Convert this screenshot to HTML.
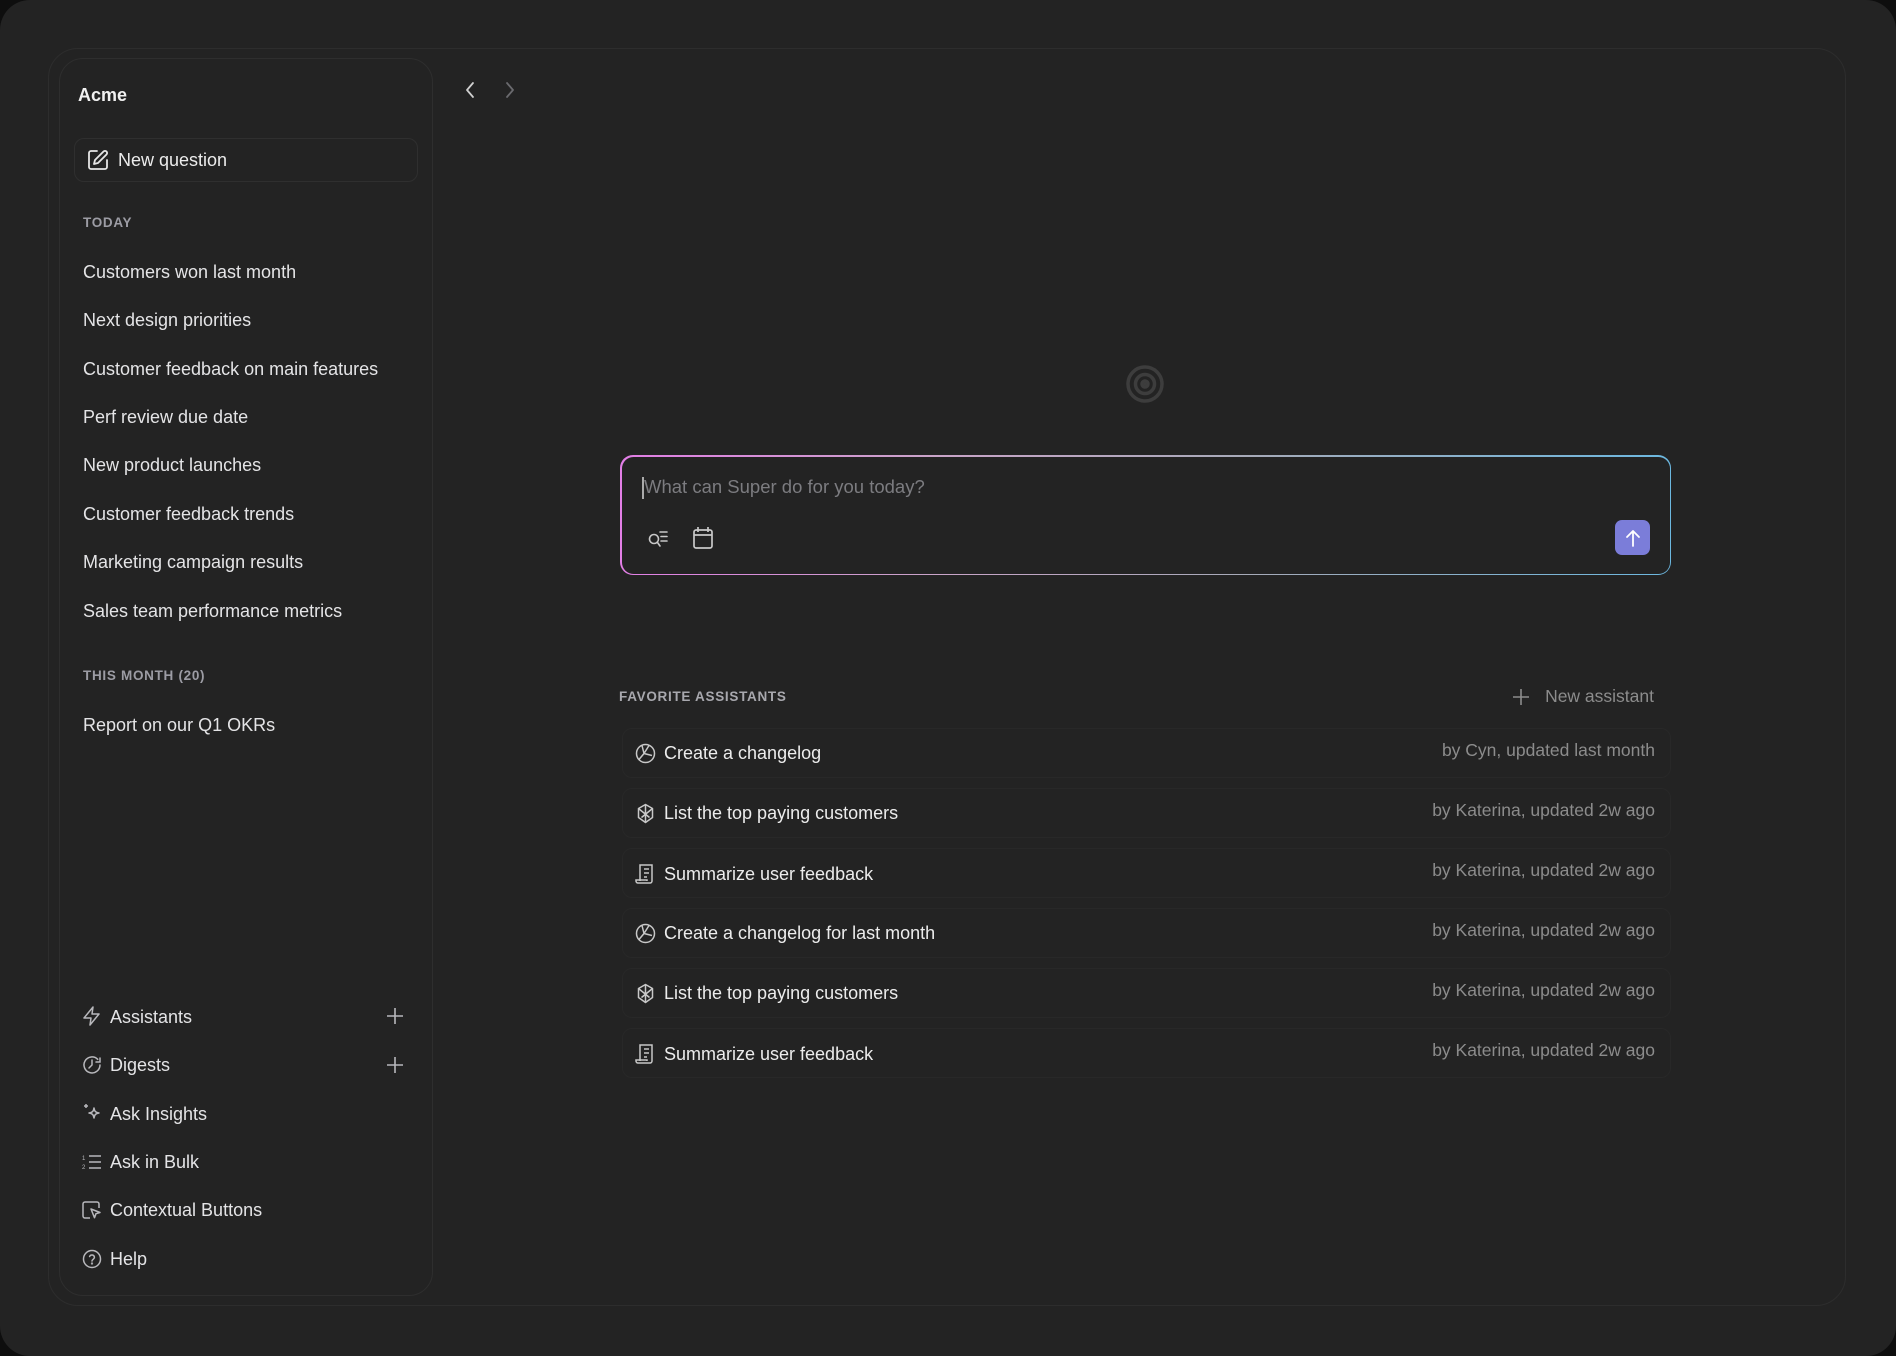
<!DOCTYPE html>
<html><head><meta charset="utf-8"><style>
*{box-sizing:border-box;margin:0;padding:0}
html,body{width:1896px;height:1356px;background:#0e0e0e;overflow:hidden;font-family:"Liberation Sans",sans-serif}
.screen{position:absolute;left:0;top:0;width:1896px;height:1356px;background:#232323;border-radius:30px}
.frame{position:absolute;left:48px;top:48px;width:1798px;height:1258px;border:1px solid #2d2d2d;border-radius:30px}
.side{position:absolute;left:59px;top:58px;width:374px;height:1238px;border:1px solid #2e2e2e;border-radius:24px}
.t{position:absolute;white-space:nowrap;line-height:1}
.item{color:#e4e4e6;font-size:18px}
.sec{color:#9c9ca4;font-size:13.5px;font-weight:bold;letter-spacing:.7px}
.nq{position:absolute;left:74px;top:138px;width:344px;height:44px;border:1px solid #2f2f2f;border-radius:10px}
svg{position:absolute;overflow:visible}
.row{position:absolute;left:622px;width:1049px;height:50px;border:1px solid #282828;border-radius:10px}
.rt{color:#ececec;font-size:18px}
.rm{color:#8c8c8c;font-size:17.5px;right:241px}
.input{position:absolute;left:620px;top:455px;width:1051px;height:120px;border-radius:13px;padding:1.5px;background:linear-gradient(90deg,#e27ee6,#c9a4c8 30%,#a6aab8 60%,#6cb8e0)}
.input>div{width:100%;height:100%;background:#232323;border-radius:11.5px}
</style></head><body>
<div class="screen"></div>
<div class="frame"></div>
<div class="side"></div>

<div class="t" style="left:78px;top:86px;color:#f0f0f0;font-size:18px;font-weight:bold">Acme</div>
<div class="nq"></div>
<svg style="left:87px;top:149px" width="22" height="22" viewBox="0 0 22 22" fill="none" stroke="#e6e6e6" stroke-width="1.8" stroke-linecap="round" stroke-linejoin="round"><path d="M10 2H4a2 2 0 0 0-2 2v14a2 2 0 0 0 2 2h14a2 2 0 0 0 2-2v-7"/><path d="M16.5 2.5a2.1 2.1 0 0 1 3 3L11 14l-4 1 1-4z"/></svg>
<div class="t" style="left:118px;top:151px;color:#ececec;font-size:18px">New question</div>

<div class="t sec" style="left:83px;top:216px">TODAY</div>
<div class="t item" style="left:83px;top:263px">Customers won last month</div>
<div class="t item" style="left:83px;top:311px">Next design priorities</div>
<div class="t item" style="left:83px;top:360px">Customer feedback on main features</div>
<div class="t item" style="left:83px;top:408px">Perf review due date</div>
<div class="t item" style="left:83px;top:456px">New product launches</div>
<div class="t item" style="left:83px;top:505px">Customer feedback trends</div>
<div class="t item" style="left:83px;top:553px">Marketing campaign results</div>
<div class="t item" style="left:83px;top:602px">Sales team performance metrics</div>
<div class="t sec" style="left:83px;top:669px">THIS MONTH (20)</div>
<div class="t item" style="left:83px;top:716px">Report on our Q1 OKRs</div>

<svg style="left:82px;top:1006px" width="20" height="20" viewBox="0 0 20 20" fill="none" stroke="#b8b8bc" stroke-width="1.5" stroke-linejoin="round"><path d="M11 1L2 12h7l-1 7 9-11h-7z"/></svg>
<div class="t item" style="left:110px;top:1008px">Assistants</div>
<svg style="left:386px;top:1007px" width="18" height="18" viewBox="0 0 18 18" stroke="#b8b8bc" stroke-width="1.6"><path d="M9 1v16M1 9h16"/></svg>
<svg style="left:82px;top:1055px" width="20" height="20" viewBox="0 0 20 20" fill="none" stroke="#b8b8bc" stroke-width="1.5" stroke-linecap="round"><path d="M18 10a8 8 0 1 1-2.3-5.7M18 3v4h-4"/><path d="M10 5v5l-3 3"/></svg>
<div class="t item" style="left:110px;top:1056px">Digests</div>
<svg style="left:386px;top:1056px" width="18" height="18" viewBox="0 0 18 18" stroke="#b8b8bc" stroke-width="1.6"><path d="M9 1v16M1 9h16"/></svg>
<svg style="left:82px;top:1103px" width="20" height="20" viewBox="0 0 20 20" fill="none" stroke="#b8b8bc" stroke-width="1.5" stroke-linejoin="round"><path d="M12 5c.6 3.5 1.5 4.4 5 5-3.5.6-4.4 1.5-5 5-.6-3.5-1.5-4.4-5-5 3.5-.6 4.4-1.5 5-5z"/><path d="M4 1v4M2 3h4"/></svg>
<div class="t item" style="left:110px;top:1105px">Ask Insights</div>
<svg style="left:82px;top:1152px" width="20" height="20" viewBox="0 0 20 20" fill="none" stroke="#b8b8bc" stroke-width="1.5"><path d="M7 4h12M7 10h12M7 16h12"/><text x="0" y="8" font-size="6" fill="#b8b8bc" stroke="none" font-family="Liberation Sans">1</text><text x="0" y="17" font-size="6" fill="#b8b8bc" stroke="none" font-family="Liberation Sans">2</text></svg>
<div class="t item" style="left:110px;top:1153px">Ask in Bulk</div>
<svg style="left:82px;top:1200px" width="20" height="20" viewBox="0 0 20 20" fill="none" stroke="#b8b8bc" stroke-width="1.5" stroke-linejoin="round"><path d="M8 18H3a2 2 0 0 1-2-2V4a2 2 0 0 1 2-2h12a2 2 0 0 1 2 2v4"/><path d="M9 9l9 3.5-4 1.2-1.5 4z"/></svg>
<div class="t item" style="left:110px;top:1201px">Contextual Buttons</div>
<svg style="left:82px;top:1249px" width="20" height="20" viewBox="0 0 20 20" fill="none" stroke="#b8b8bc" stroke-width="1.5" stroke-linecap="round"><circle cx="10" cy="10" r="8.5"/><path d="M7.6 7.5a2.5 2.5 0 0 1 4.8 1c0 1.6-2.4 2-2.4 3.5"/><circle cx="10" cy="14.5" r=".4" fill="#b8b8bc"/></svg>
<div class="t item" style="left:110px;top:1250px">Help</div>

<svg style="left:464px;top:81px" width="12" height="18" viewBox="0 0 12 18" fill="none" stroke="#d0d0d0" stroke-width="1.8" stroke-linecap="round" stroke-linejoin="round"><path d="M9 2L3 9l6 7"/></svg>
<svg style="left:504px;top:81px" width="12" height="18" viewBox="0 0 12 18" fill="none" stroke="#6a6a6e" stroke-width="1.8" stroke-linecap="round" stroke-linejoin="round"><path d="M3 2l6 7-6 7"/></svg>

<svg style="left:1125px;top:364px" width="40" height="40" viewBox="0 0 40 40" fill="none" stroke="#3d3d3d" stroke-width="3.5"><circle cx="20" cy="20" r="17"/><circle cx="20" cy="20" r="9.5"/><circle cx="20" cy="20" r="3" fill="#3d3d3d"/></svg>

<div class="input"><div></div></div>
<div style="position:absolute;left:642px;top:477px;width:1.5px;height:22px;background:#aaa"></div>
<div class="t" style="left:644px;top:478px;color:#7c7c80;font-size:18.5px">What can Super do for you today?</div>
<svg style="left:647px;top:528px" width="22" height="22" viewBox="0 0 22 22" fill="none" stroke="#c8c8c8" stroke-width="1.6" stroke-linecap="round"><circle cx="7" cy="11" r="4.5"/><path d="M10.5 14.5L13 18M13 4h7M14 8.5h6M14 13h6"/></svg>
<svg style="left:692px;top:526px" width="22" height="24" viewBox="0 0 22 24" fill="none" stroke="#c8c8c8" stroke-width="1.7"><rect x="2" y="4" width="18" height="18" rx="2"/><path d="M6 1v5M16 1v5M2 9h18"/></svg>
<div style="position:absolute;left:1615px;top:520px;width:35px;height:35px;border-radius:7px;background:#7b7dd9"></div>
<svg style="left:1624px;top:528px" width="18" height="20" viewBox="0 0 18 20" fill="none" stroke="#fff" stroke-width="1.8" stroke-linecap="round" stroke-linejoin="round"><path d="M9 18V3M3 9l6-6 6 6"/></svg>

<div class="t sec" style="left:619px;top:690px;color:#a8a8ae">FAVORITE ASSISTANTS</div>
<svg style="left:1512px;top:688px" width="18" height="18" viewBox="0 0 18 18" stroke="#8c8c8c" stroke-width="1.6"><path d="M9 1v16M1 9h16"/></svg>
<div class="t" style="right:242px;top:688px;color:#8c8c8c;font-size:17.5px">New assistant</div>

<div class="row" style="top:728px"></div>
<div class="row" style="top:788px"></div>
<div class="row" style="top:848px"></div>
<div class="row" style="top:908px"></div>
<div class="row" style="top:968px"></div>
<div class="row" style="top:1028px"></div>

<svg style="left:635px;top:743px" width="21" height="21" viewBox="0 0 21 21" fill="none" stroke="#c8c8c8" stroke-width="1.5"><circle cx="10.5" cy="10.5" r="9"/><path d="M7 2.5l2 8-5 6M14 2.5l-5 8 8 2"/></svg>
<div class="t rt" style="left:664px;top:744px">Create a changelog</div>
<div class="t rm" style="top:742px">by Cyn, updated last month</div>

<svg style="left:635px;top:803px" width="21" height="21" viewBox="0 0 21 21" fill="none" stroke="#c8c8c8" stroke-width="1.5" stroke-linejoin="round"><path d="M10.5 1.5l7 4v9l-7 5-7-5v-9z"/><path d="M3.5 5.5l11 9M17.5 5.5l-11 9M10.5 1.5v18"/></svg>
<div class="t rt" style="left:664px;top:804px">List the top paying customers</div>
<div class="t rm" style="top:802px">by Katerina, updated 2w ago</div>

<svg style="left:635px;top:863px" width="21" height="22" viewBox="0 0 21 22" fill="none" stroke="#c8c8c8" stroke-width="1.5"><path d="M5 18V2h12v16a2 2 0 0 1-2 2H3a2 2 0 0 1-2-2v-1h11v1"/><path d="M9 6h5M9 10h5M9 14h3"/></svg>
<div class="t rt" style="left:664px;top:865px">Summarize user feedback</div>
<div class="t rm" style="top:862px">by Katerina, updated 2w ago</div>

<svg style="left:635px;top:923px" width="21" height="21" viewBox="0 0 21 21" fill="none" stroke="#c8c8c8" stroke-width="1.5"><circle cx="10.5" cy="10.5" r="9"/><path d="M7 2.5l2 8-5 6M14 2.5l-5 8 8 2"/></svg>
<div class="t rt" style="left:664px;top:924px">Create a changelog for last month</div>
<div class="t rm" style="top:922px">by Katerina, updated 2w ago</div>

<svg style="left:635px;top:983px" width="21" height="21" viewBox="0 0 21 21" fill="none" stroke="#c8c8c8" stroke-width="1.5" stroke-linejoin="round"><path d="M10.5 1.5l7 4v9l-7 5-7-5v-9z"/><path d="M3.5 5.5l11 9M17.5 5.5l-11 9M10.5 1.5v18"/></svg>
<div class="t rt" style="left:664px;top:984px">List the top paying customers</div>
<div class="t rm" style="top:982px">by Katerina, updated 2w ago</div>

<svg style="left:635px;top:1043px" width="21" height="22" viewBox="0 0 21 22" fill="none" stroke="#c8c8c8" stroke-width="1.5"><path d="M5 18V2h12v16a2 2 0 0 1-2 2H3a2 2 0 0 1-2-2v-1h11v1"/><path d="M9 6h5M9 10h5M9 14h3"/></svg>
<div class="t rt" style="left:664px;top:1045px">Summarize user feedback</div>
<div class="t rm" style="top:1042px">by Katerina, updated 2w ago</div>
</body></html>
